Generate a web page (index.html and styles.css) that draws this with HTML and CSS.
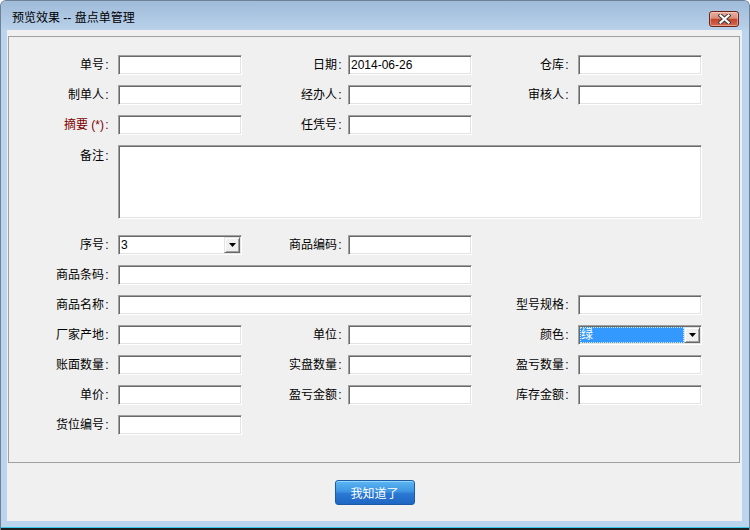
FILE: index.html
```html
<!DOCTYPE html>
<html lang="zh-CN">
<head>
<meta charset="utf-8">
<title>预览效果 -- 盘点单管理</title>
<link rel="stylesheet" href="styles.css">
</head>
<body>
<div class="window">
  <div class="titlebar">
    <span class="title">预览效果 -- 盘点单管理</span>
    <button class="close" type="button" aria-label="关闭">
      <svg width="13" height="10" viewBox="0 0 13 10">
        <path d="M2.5 1.5 L10.5 8.5 M10.5 1.5 L2.5 8.5" stroke="#3c3c3c" stroke-width="4.2" stroke-linecap="square" fill="none"/>
        <path d="M2.5 1.5 L10.5 8.5 M10.5 1.5 L2.5 8.5" stroke="#ffffff" stroke-width="2.2" stroke-linecap="square" fill="none"/>
      </svg>
    </button>
  </div>
  <div class="client">
    <div class="groupbox">
      <div class="form">
        <label class="lbl c1">单号<span class="colon">:</span></label><input class="field" type="text">
        <label class="lbl m">日期<span class="colon">:</span></label><input class="field" type="text" value="2014-06-26">
        <label class="lbl">仓库<span class="colon">:</span></label><input class="field" type="text">

        <label class="lbl c1">制单人<span class="colon">:</span></label><input class="field" type="text">
        <label class="lbl m">经办人<span class="colon">:</span></label><input class="field" type="text">
        <label class="lbl">审核人<span class="colon">:</span></label><input class="field" type="text">

        <label class="lbl c1 req">摘要 (*)<span class="colon">:</span></label><input class="field" type="text">
        <label class="lbl m">任凭号<span class="colon">:</span></label><input class="field" type="text">

        <label class="lbl c1 top">备注<span class="colon">:</span></label><textarea class="field area"></textarea>

        <label class="lbl c1">序号<span class="colon">:</span></label>
        <div class="combo"><span class="val">3</span><span class="dd"><svg width="7" height="4" viewBox="0 0 7 4"><polygon points="0,0 7,0 3.5,4" fill="#000"/></svg></span></div>
        <label class="lbl m">商品编码<span class="colon">:</span></label><input class="field" type="text">

        <label class="lbl c1">商品条码<span class="colon">:</span></label><input class="field wide" type="text">

        <label class="lbl c1">商品名称<span class="colon">:</span></label><input class="field wide" type="text">
        <label class="lbl">型号规格<span class="colon">:</span></label><input class="field" type="text">

        <label class="lbl c1">厂家产地<span class="colon">:</span></label><input class="field" type="text">
        <label class="lbl m">单位<span class="colon">:</span></label><input class="field" type="text">
        <label class="lbl">颜色<span class="colon">:</span></label>
        <div class="combo"><span class="val sel">绿</span><span class="dd"><svg width="7" height="4" viewBox="0 0 7 4"><polygon points="0,0 7,0 3.5,4" fill="#000"/></svg></span></div>

        <label class="lbl c1">账面数量<span class="colon">:</span></label><input class="field" type="text">
        <label class="lbl m">实盘数量<span class="colon">:</span></label><input class="field" type="text">
        <label class="lbl">盈亏数量<span class="colon">:</span></label><input class="field" type="text">

        <label class="lbl c1">单价<span class="colon">:</span></label><input class="field" type="text">
        <label class="lbl m">盈亏金额<span class="colon">:</span></label><input class="field" type="text">
        <label class="lbl">库存金额<span class="colon">:</span></label><input class="field" type="text">

        <label class="lbl c1">货位编号<span class="colon">:</span></label><input class="field" type="text">
      </div>
    </div>
    <div class="footer">
      <button class="ok" type="button">我知道了</button>
    </div>
  </div>
  <div class="frame-bottom"></div>
  <div class="edge-cyan"></div>
  <div class="edge-dark"></div>
</div>
</body>
</html>
```
FILE: styles.css
```css
* { box-sizing: border-box; }
html, body { margin: 0; padding: 0; }
body {
  width: 750px;
  height: 530px;
  overflow: hidden;
  background: #ffffff;
  font: 12px "Liberation Sans", "Noto Sans CJK SC", sans-serif;
  color: #000;
}
.window {
  width: 750px;
  height: 530px;
  display: flex;
  flex-direction: column;
  background: #bcd5ee;
  border: 1px solid #6f8196;
  border-bottom: none;
  border-radius: 6px 6px 0 0;
  overflow: hidden;
}
.titlebar {
  flex: none;
  height: 29px;
  display: flex;
  align-items: center;
  justify-content: space-between;
  padding: 5px 10px 0 11px;
  background: linear-gradient(#9fbbd9, #b9d1ea);
}
.title { line-height: 16px; }
.close {
  width: 30px;
  height: 16px;
  padding: 0;
  margin-top: 1px;
  display: flex;
  align-items: center;
  justify-content: center;
  border: 1px solid #6a2418;
  border-radius: 3px;
  background: linear-gradient(#eab0a2 0%, #db8b77 45%, #c4432c 52%, #d36a51 100%);
  box-shadow: inset 0 0 0 1px rgba(255, 225, 215, 0.45);
}
.client {
  flex: none;
  height: 491px;
  margin: 0 7px 0 6px;
  background: #f0f0f0;
  display: flex;
  flex-direction: column;
}
.groupbox {
  margin: 6px 2px 0 1px;
  border: 1px solid #a0a0a0;
  padding: 18px 0 27px 0;
}
.form {
  display: grid;
  grid-template-columns: 109px 124px 106px 124px 106px 124px;
  grid-template-rows: 20px 20px 20px 80px repeat(7, 20px);
  row-gap: 10px;
}
.lbl {
  text-align: right;
  padding-right: 8px;
  line-height: 20px;
  white-space: nowrap;
}
.lbl.m { padding-right: 5px; }
.colon {
  display: inline-block;
  width: 6px;
  text-align: center;
}
.c1 { grid-column: 1; }
.req { color: #800000; }
.lbl.top { align-self: start; line-height: 22px; }
.field {
  height: 20px;
  width: 100%;
  margin: 0;
  padding: 0 2px;
  font: 12px "Liberation Sans", "Noto Sans CJK SC", sans-serif;
  color: #000;
  background: #fff;
  border: 1px solid;
  border-color: #a0a0a0 #ffffff #ffffff #a0a0a0;
  box-shadow: inset 1px 1px 0 #696969, inset -1px -1px 0 #e3e3e3;
  outline: none;
}
.wide { grid-column: span 3; }
.area {
  grid-column: 2 / 7;
  height: 74px;
  align-self: start;
  resize: none;
}
.combo {
  height: 20px;
  display: flex;
  padding: 1px;
  background: #fff;
  border: 1px solid;
  border-color: #a0a0a0 #ffffff #ffffff #a0a0a0;
  box-shadow: inset 1px 1px 0 #696969, inset -1px -1px 0 #e3e3e3;
}
.combo .val {
  flex: 1;
  padding-left: 1px;
  line-height: 16px;
}
.combo .val.sel {
  background: #3399ff;
  color: #fff;
  outline: 1px dotted #cfe6ff;
  outline-offset: -1px;
}
.combo .dd {
  width: 16px;
  height: 16px;
  display: flex;
  align-items: center;
  justify-content: center;
  background: #f0f0f0;
  border: 1px solid;
  border-color: #e3e3e3 #696969 #696969 #e3e3e3;
  box-shadow: inset 1px 1px 0 #ffffff, inset -1px -1px 0 #a0a0a0;
}
.footer {
  flex: 1;
  display: flex;
  justify-content: center;
  align-items: flex-start;
  padding-top: 17px;
}
.ok {
  width: 80px;
  height: 25px;
  padding: 0;
  font: 12px "Liberation Sans", "Noto Sans CJK SC", sans-serif;
  color: #fff;
  border: 1px solid #1b5aa8;
  border-radius: 3px;
  background: linear-gradient(#5cb6f2 0%, #3e95e2 45%, #2a79d4 55%, #1f66c3 100%);
  box-shadow: inset 0 1px 0 #93d8fb;
}
.frame-bottom { flex: none; height: 6px; }
.edge-cyan { flex: none; height: 1px; background: #38c6e6; }
.edge-dark { flex: none; height: 2px; background: #1e1e1e; }
```
